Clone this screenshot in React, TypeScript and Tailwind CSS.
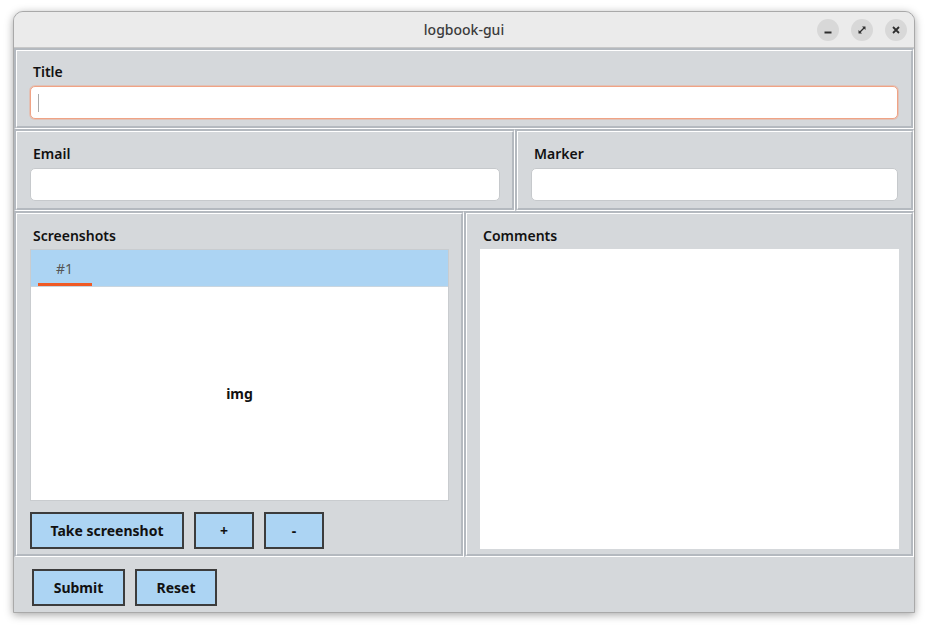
import React from "react";

function Panel({ className = "", children }: { className?: string; children?: React.ReactNode }) {
  return (
    <div className={"border-t-2 border-l-2 border-t-[#b4b9bf] border-l-[#b4b9bf] border-b border-r border-b-white border-r-white " + className}>
      <div className="h-full w-full border-t border-l border-t-white border-l-white border-b-2 border-r-2 border-b-[#b4b9bf] border-r-[#b4b9bf] bg-[#d5d8db] flex flex-col">
        {children}
      </div>
    </div>
  );
}

const btn =
  "h-[37px] bg-[#acd4f3] border-2 border-[#3c3c3c] text-[14px] font-bold text-[#111] flex items-center justify-center";

const label = "ml-[3px] text-[14px] font-semibold text-[#111] leading-[18px]";

export default function App() {
  return (
    <div
      className="w-[928px] h-[629px] bg-white relative"
      style={{ fontFamily: '"Noto Sans", "Open Sans", sans-serif' }}
    >
      <div className="absolute left-[13px] top-[11px] w-[902px] h-[602px] rounded-t-[10px] border border-[#a9a9a9] shadow-[0_2px_8px_rgba(0,0,0,0.35)] overflow-hidden flex flex-col bg-[#d5d8db]">
        {/* title bar */}
        <div className="h-[36px] shrink-0 bg-[#ebebeb] border-b border-[#c8c8c8] relative flex items-center justify-center">
          <span className="text-[14px] font-medium text-[#3b3b3b]">logbook-gui</span>
          <div className="absolute right-[7px] top-[7px] flex gap-[12px]">
            <div className="w-[22px] h-[22px] rounded-full bg-[#d8d8d8] flex items-center justify-center">
              <svg width="10" height="10" viewBox="0 0 10 10"><rect x="1.5" y="6.5" width="7" height="2" fill="#2e2e2e" /></svg>
            </div>
            <div className="w-[22px] h-[22px] rounded-full bg-[#d8d8d8] flex items-center justify-center">
              <svg width="10" height="10" viewBox="0 0 10 10">
                <path d="M5 1.5h3.5V5z" fill="#2e2e2e" />
                <path d="M1.5 5v3.5H5z" fill="#2e2e2e" />
                <path d="M3 7L7 3" stroke="#2e2e2e" strokeWidth="1.2" />
              </svg>
            </div>
            <div className="w-[22px] h-[22px] rounded-full bg-[#d8d8d8] flex items-center justify-center">
              <svg width="10" height="10" viewBox="0 0 10 10">
                <path d="M2 2L8 8M8 2L2 8" stroke="#2e2e2e" strokeWidth="1.8" />
              </svg>
            </div>
          </div>
        </div>

        {/* content */}
        <div className="flex-1 flex flex-col">
          <Panel className="h-[81px]">
            <div className="pl-[13px] pr-[13px] pt-[12px] flex flex-col">
              <span className={label}>Title</span>
              <div className="mt-[5px] h-[33px] bg-white rounded-[5px] border border-[#f0a385] shadow-[0_0_0_1px_rgba(240,163,133,0.4)] flex items-center pl-[7px]">
                <div className="w-px h-[18px] bg-[#aaa]" />
              </div>
            </div>
          </Panel>
          <div className="flex h-[82px]">
            <Panel className="w-[501px]">
              <div className="pl-[13px] pr-[12px] pt-[13px] flex flex-col">
                <span className={label}>Email</span>
                <div className="mt-[5px] h-[33px] bg-white rounded-[5px] border border-[#c6c9cc]" />
              </div>
            </Panel>
            <Panel className="flex-1">
              <div className="pl-[13px] pr-[13px] pt-[13px] flex flex-col">
                <span className={label}>Marker</span>
                <div className="mt-[5px] h-[33px] bg-white rounded-[5px] border border-[#c6c9cc]" />
              </div>
            </Panel>
          </div>
          <div className="flex h-[346px]">
            <Panel className="w-[450px]">
              <div className="pl-[13px] pr-[12px] pt-[13px] flex flex-col h-full">
                <span className={label}>Screenshots</span>
                <div className="mt-[4px] h-[252px] flex flex-col border border-[#c9cccf] bg-white">
                  <div className="h-[37px] bg-[#acd4f3] relative border-b border-[#c9d6e0]">
                    <span className="absolute left-[25px] top-[8px] text-[14px] text-[#555]">#1</span>
                    <div className="absolute left-[7px] bottom-0 w-[54px] h-[3px] bg-[#f05a24]" />
                  </div>
                  <div className="flex-1 flex items-center justify-center">
                    <span className="text-[14px] font-bold text-[#111]">img</span>
                  </div>
                </div>
                <div className="mt-[11px] flex gap-[10px]">
                  <div className={btn + " w-[154px]"}>Take screenshot</div>
                  <div className={btn + " w-[60px]"}>+</div>
                  <div className={btn + " w-[60px]"}>-</div>
                </div>
              </div>
            </Panel>
            <Panel className="flex-1">
              <div className="pl-[13px] pr-[12px] pt-[13px] flex flex-col h-full">
                <span className={"ml-[3px] text-[14px] font-semibold text-[#111] leading-[18px]"}>Comments</span>
                <div className="mt-[4px] h-[300px] bg-white" />
              </div>
            </Panel>
          </div>
          <div className="flex-1 flex items-start gap-[10px] pl-[18px] pt-[12px]">
            <div className={btn + " w-[93px]"}>Submit</div>
            <div className={btn + " w-[82px]"}>Reset</div>
          </div>
        </div>
      </div>
    </div>
  );
}
